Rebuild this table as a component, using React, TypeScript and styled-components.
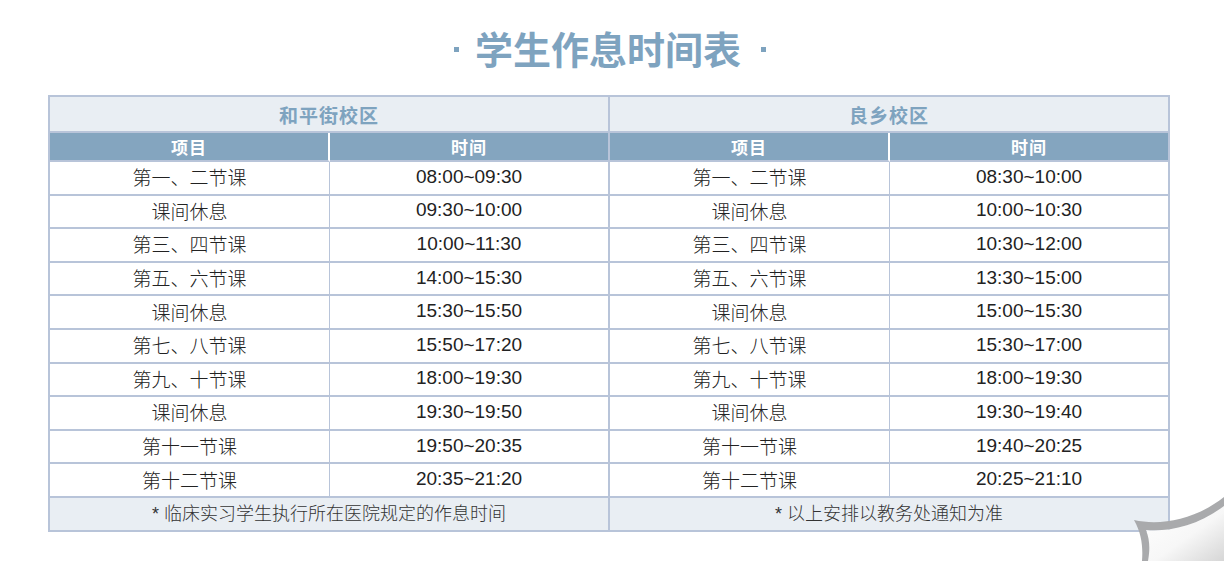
import React from 'react';
import styled, { createGlobalStyle } from 'styled-components';

const GlobalStyle = createGlobalStyle`
  html, body {
    margin: 0;
    padding: 0;
    background: #ffffff;
  }
  body {
    font-family: "Liberation Sans", "Noto Sans CJK SC", sans-serif;
    color: #222;
  }
`;

const LINE = '#b8c4d9';
const HEAD_BG = '#e9eef3';
const BAR_BG = '#84a5bf';
const ACCENT = '#7ea3bf';

const Page = styled.div`
  position: relative;
  width: 1224px;
  height: 561px;
  overflow: hidden;
`;

const TitleBar = styled.div`
  height: 95px;
  display: flex;
  align-items: center;
  justify-content: center;
`;

const Dot = styled.span<{ $gap: number }>`
  width: 5px;
  height: 5px;
  background: ${ACCENT};
  margin: 4px ${(p) => p.$gap}px 0;
`;

const TitleText = styled.h1`
  margin: 0;
  font-family: "Noto Sans CJK SC", sans-serif;
  font-size: 38px;
  font-weight: 700;
  line-height: 1;
  color: ${ACCENT};
`;

const TableWrap = styled.div`
  padding-left: 48px;
`;

const Table = styled.table`
  width: 1120px;
  table-layout: fixed;
  border-collapse: separate;
  border-spacing: 0;
  border-top: 2px solid ${LINE};
  border-left: 2px solid ${LINE};
`;

const Cell = styled.td<{ $split?: boolean }>`
  padding: 0 0 2px;
  text-align: center;
  vertical-align: middle;
  border-bottom: 2px solid ${LINE};
  border-right: ${(p) => (p.$split ? `2px solid ${LINE}` : `1px solid ${LINE}`)};
  font-size: 19px;
  font-weight: 300;
  color: #222;
`;

const Row = styled.tr`
  height: 33.6px;
`;

const CampusRow = styled.tr`
  height: 36px;
`;

const CampusCell = styled.th`
  padding: 0;
  text-align: center;
  background: ${HEAD_BG};
  border-bottom: 2px solid ${LINE};
  border-right: 2px solid ${LINE};
  font-family: "Noto Sans CJK SC", sans-serif;
  font-size: 19px;
  letter-spacing: 1px;
  font-weight: 700;
  color: ${ACCENT};
`;

const BarRow = styled.tr`
  height: 29px;
`;

const BarCell = styled.th<{ $split?: boolean }>`
  padding: 0;
  text-align: center;
  background: ${BAR_BG};
  border-bottom: 2px solid ${LINE};
  border-right: ${(p) => (p.$split ? `2px solid ${LINE}` : '2px solid #ffffff')};
  font-family: "Noto Sans CJK SC", sans-serif;
  font-size: 17px;
  letter-spacing: 1px;
  font-weight: 700;
  color: #ffffff;
`;

const NoteCell = styled.td`
  padding: 0 0 3px;
  text-align: center;
  background: ${HEAD_BG};
  border-bottom: 2px solid ${LINE};
  border-right: 2px solid ${LINE};
  font-size: 18px;
  font-weight: 300;
  color: #333;
`;

const Curl = styled.svg`
  position: absolute;
  left: 1130px;
  top: 492px;
`;

const left = [
  ['第一、二节课', '08:00~09:30'],
  ['课间休息', '09:30~10:00'],
  ['第三、四节课', '10:00~11:30'],
  ['第五、六节课', '14:00~15:30'],
  ['课间休息', '15:30~15:50'],
  ['第七、八节课', '15:50~17:20'],
  ['第九、十节课', '18:00~19:30'],
  ['课间休息', '19:30~19:50'],
  ['第十一节课', '19:50~20:35'],
  ['第十二节课', '20:35~21:20'],
];

const right = [
  ['第一、二节课', '08:30~10:00'],
  ['课间休息', '10:00~10:30'],
  ['第三、四节课', '10:30~12:00'],
  ['第五、六节课', '13:30~15:00'],
  ['课间休息', '15:00~15:30'],
  ['第七、八节课', '15:30~17:00'],
  ['第九、十节课', '18:00~19:30'],
  ['课间休息', '19:30~19:40'],
  ['第十一节课', '19:40~20:25'],
  ['第十二节课', '20:25~21:10'],
];

const PageCurl = () => (
  <Curl width="94" height="69" viewBox="0 0 94 69">
    <defs>
      <linearGradient id="curlFace" x1="0" y1="0" x2="1" y2="1">
        <stop offset="0" stopColor="#ffffff" />
        <stop offset="0.55" stopColor="#f7f7f7" />
        <stop offset="1" stopColor="#d6d6d6" />
      </linearGradient>
    </defs>
    <path
      d="M16,38 C38,40 68,34 94,14 L94,69 L17,69 C20,58 20,48 16,38 Z"
      fill="url(#curlFace)"
    />
    <path
      d="M4,28 C30,34 65,28 94,5 L94,14 C68,34 38,40 16,38 C20,48 20,58 18,69 L12,69 C13,56 12,42 4,28 Z"
      fill="#a9aaac"
    />
  </Curl>
);

export default function App() {
  return (
    <Page>
      <GlobalStyle />
      <TitleBar>
        <Dot $gap={16} />
        <TitleText>学生作息时间表</TitleText>
        <Dot $gap={20} />
      </TitleBar>
      <TableWrap>
        <Table>
          <colgroup>
            <col style={{ width: 280 }} />
            <col style={{ width: 280 }} />
            <col style={{ width: 280 }} />
            <col style={{ width: 280 }} />
          </colgroup>
          <thead>
            <CampusRow>
              <CampusCell colSpan={2}>和平街校区</CampusCell>
              <CampusCell colSpan={2}>良乡校区</CampusCell>
            </CampusRow>
            <BarRow>
              <BarCell>项目</BarCell>
              <BarCell $split>时间</BarCell>
              <BarCell>项目</BarCell>
              <BarCell $split>时间</BarCell>
            </BarRow>
          </thead>
          <tbody>
            {left.map((row, i) => (
              <Row key={i}>
                <Cell>{row[0]}</Cell>
                <Cell $split>{row[1]}</Cell>
                <Cell>{right[i][0]}</Cell>
                <Cell $split>{right[i][1]}</Cell>
              </Row>
            ))}
            <Row>
              <NoteCell colSpan={2}>* 临床实习学生执行所在医院规定的作息时间</NoteCell>
              <NoteCell colSpan={2}>* 以上安排以教务处通知为准</NoteCell>
            </Row>
          </tbody>
        </Table>
      </TableWrap>
      <PageCurl />
    </Page>
  );
}
